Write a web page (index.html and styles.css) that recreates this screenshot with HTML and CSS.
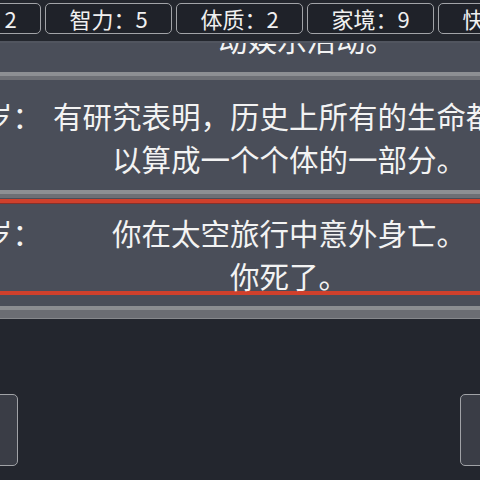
FILE: index.html
```html
<!DOCTYPE html>
<html lang="zh-CN">
<head>
<meta charset="utf-8">
<title>人生重开模拟器</title>
<link rel="stylesheet" href="styles.css">
</head>
<body>
<div class="screen">
  <div class="topbar">
    <div class="stat">颜值：2</div>
    <div class="stat">智力：5</div>
    <div class="stat">体质：2</div>
    <div class="stat">家境：9</div>
    <div class="stat">快乐：5</div>
  </div>
  <div class="list">
    <div class="item first">
      <div class="label"></div>
      <div class="text shifted">动娱乐活动。</div>
    </div>
    <div class="item sep">
      <div class="label">岁：</div>
      <div class="text">有研究表明，历史上所有的生命都可以算成一个个体的一部分。</div>
    </div>
    <div class="item sep last">
      <div class="frame">
        <div class="label">岁：</div>
        <div class="text">你在太空旅行中意外身亡。<br>你死了。</div>
      </div>
    </div>
    <div class="list-end"></div>
  </div>
  <div class="controls">
    <div class="ctrl"></div>
    <div class="ctrl"></div>
  </div>
</div>
</body>
</html>
```
FILE: styles.css
```css
html, body {
  margin: 0;
  padding: 0;
  overflow: hidden;
  background: #23262e;
}
.screen {
  position: relative;
  width: 480px;
  height: 480px;
  overflow: hidden;
  background: #23262e;
  font-family: "Noto Sans CJK SC", "Noto Sans", sans-serif;
  color: #f3f3f3;
}
.topbar {
  position: absolute;
  top: 0;
  left: 0;
  z-index: 2;
  height: 43px;
  background: #23262d;
  border-bottom: 2px solid #51555f;
  display: flex;
  gap: 4px;
  padding-top: 3px;
  box-sizing: border-box;
  margin-left: -86px;
  width: 700px;
}
.stat {
  flex: none;
  width: 127px;
  height: 31px;
  box-sizing: border-box;
  border: 1.5px solid #a2a4a8;
  border-radius: 5px;
  background: #1f2229;
  font-size: 22px;
  line-height: 28px;
  text-align: center;
  color: #f0f0f0;
}
.list {
  display: flex;
  flex-direction: column;
}
.item {
  display: flex;
  background: #4a4e59;
  font-size: 29.5px;
  line-height: 43px;
}
.item.first {
  padding: 17px 0 12px;
}
.item.sep {
  border-top: 4px solid #8d8f93;
  box-shadow: inset 0 4px 0 #6d6f75;
  padding: 18px 0 10px;
}
.item.last {
  padding: 4px 0 11px;
}
.frame {
  display: flex;
  flex: 1;
  margin-top: 1px;
  height: 96px;
  box-sizing: border-box;
  border-top: 4px solid #cf402c;
  border-bottom: 4px solid #cf402c;
  box-shadow: inset 0 1px 0 #86302a;
  padding-top: 8px;
}
.label {
  flex: none;
  width: 59px;
  margin-left: -17px;
  text-align: right;
  white-space: nowrap;
}
.text {
  flex: none;
  width: 474px;
  margin-left: 10px;
  text-align: center;
}
.text.shifted {
  padding-left: 35px;
  box-sizing: border-box;
}
.list-end {
  height: 8px;
  background: #6b6d73;
  border-top: 4px solid #8b8d91;
  border-bottom: 1px solid #86888c;
}
.controls {
  display: flex;
  justify-content: space-between;
  margin: 75px -100px 0 -102px;
}
.ctrl {
  flex: none;
  width: 120px;
  height: 72px;
  box-sizing: border-box;
  border: 1.5px solid #a0a2a6;
  border-radius: 5px;
  background: #3a3d46;
}
```
